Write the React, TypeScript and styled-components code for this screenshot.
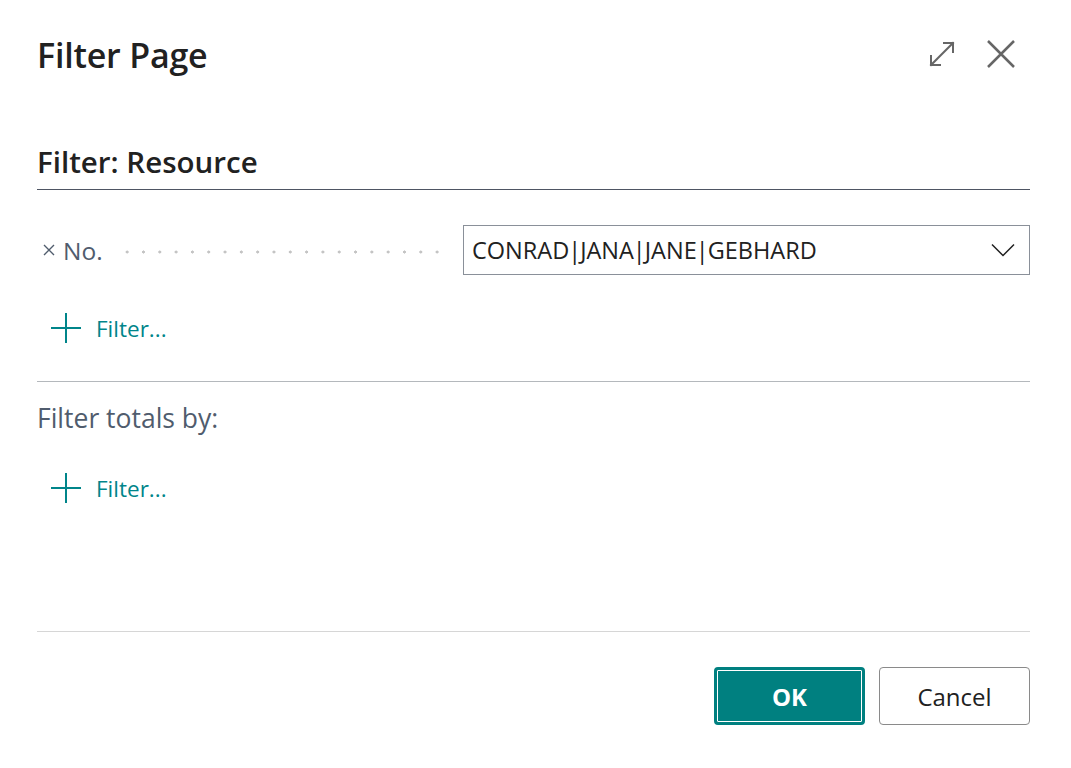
import React from "react";
import styled, { createGlobalStyle } from "styled-components";

const Global = createGlobalStyle`
  html, body { margin: 0; padding: 0; background: #ffffff; }
  body { font-family: "Open Sans", "Noto Sans", sans-serif; color: #212121; }
  * { box-sizing: border-box; }
`;

const Dialog = styled.div`
  width: 1071px;
  height: 768px;
  padding: 0 41px 0 37px;
  display: flex;
  flex-direction: column;
`;

const Header = styled.div`
  height: 112px;
  padding-top: 33px;
  display: flex;
  align-items: flex-start;
  justify-content: space-between;
`;

const Title = styled.h1`
  margin: 0;
  font-size: 34px;
  font-weight: 600;
  line-height: 44px;
  letter-spacing: -0.2px;
  color: #212121;
`;

const HeaderIcons = styled.div`
  display: flex;
  align-items: center;
  gap: 30px;
  padding-top: 6px;
  padding-right: 14px;
`;

const IconButton = styled.button`
  border: none;
  background: none;
  padding: 0;
  margin: 0;
  display: flex;
  cursor: pointer;
`;

const SectionTitle = styled.h2`
  margin: 0;
  padding-top: 31px;
  height: 78px;
  font-size: 29.5px;
  font-weight: 600;
  line-height: 38px;
  color: #212121;
  border-bottom: 1px solid #4e5563;
`;

const FieldRow = styled.div`
  margin-top: 35px;
  display: flex;
  align-items: center;
  height: 50px;
`;

const FieldLabel = styled.div`
  width: 426px;
  display: flex;
  align-items: center;
  color: #505c6d;
  font-size: 24.5px;
  padding-left: 6px;
  padding-right: 18px;
`;

const LabelText = styled.span`
  margin-left: 8px;
  margin-right: 16px;
`;

const Leader = styled.span`
  flex: 1;
  height: 4px;
  margin-top: 4px;
  background-image: radial-gradient(circle, #c4c4c4 1.4px, transparent 1.7px);
  background-size: 16px 4px;
  background-repeat: space no-repeat;
  background-position: 0 0;
`;

const Select = styled.div`
  flex: 1;
  height: 50px;
  border: 1px solid #8a9099;
  display: flex;
  align-items: center;
  justify-content: space-between;
  padding: 0 14px 0 8px;
  font-size: 23.5px;
  color: #212121;
`;

const Pipe = styled.span`
  margin: 0 -1px;
`;

const AddFilter = styled.button<{ $top: number }>`
  margin-top: ${(p) => p.$top}px;
  align-self: flex-start;
  border: none;
  background: none;
  padding: 0 0 0 14px;
  display: flex;
  align-items: center;
  gap: 15px;
  color: #00858a;
  font-family: inherit;
  font-size: 22.5px;
  height: 34px;
  cursor: pointer;
`;

const Divider = styled.div<{ $color: string; $top: number }>`
  margin-top: ${(p) => p.$top}px;
  height: 1px;
  background: ${(p) => p.$color};
`;

const SubLabel = styled.div`
  margin-top: 20px;
  font-size: 26.5px;
  line-height: 32px;
  color: #505c6d;
`;

const Footer = styled.div`
  margin-top: 35px;
  display: flex;
  justify-content: flex-end;
  gap: 14px;
`;

const Button = styled.button<{ $primary?: boolean }>`
  width: 151px;
  height: 58px;
  border-radius: 4px;
  font-family: inherit;
  font-size: 24px;
  cursor: pointer;
  ${(p) =>
    p.$primary
      ? `
    background: #008080;
    color: #ffffff;
    font-weight: 700;
    border: 3px solid #008080;
    box-shadow: inset 0 0 0 1px #ffffff;
  `
      : `
    background: #ffffff;
    color: #212121;
    border: 1px solid #8a8a8a;
  `}
`;

const ExpandIcon = () => (
  <svg width="28" height="28" viewBox="0 0 28 28" fill="none" stroke="#666" strokeWidth="2" strokeLinecap="square">
    <path d="M3 25 L25 3" />
    <path d="M16 3 H25 V12" />
    <path d="M3 16 V25 H12" />
  </svg>
);

const CloseIcon = () => (
  <svg width="30" height="30" viewBox="0 0 30 30" fill="none" stroke="#666" strokeWidth="2.5">
    <path d="M2 2 L28 28 M28 2 L2 28" />
  </svg>
);

const SmallX = () => (
  <svg width="12" height="12" viewBox="0 0 12 12" fill="none" stroke="#505c6d" strokeWidth="1.4">
    <path d="M1 1 L11 11 M11 1 L1 11" />
  </svg>
);

const Chevron = () => (
  <svg width="24" height="14" viewBox="0 0 24 14" fill="none" stroke="#212121" strokeWidth="1.5">
    <path d="M1 1.5 L12 12.5 L23 1.5" />
  </svg>
);

const Plus = () => (
  <svg width="30" height="30" viewBox="0 0 30 30" fill="none" stroke="#00858a" strokeWidth="2">
    <path d="M15 0 V30 M0 15 H30" />
  </svg>
);

const values = ["CONRAD", "JANA", "JANE", "GEBHARD"];

export default function App() {
  return (
    <>
      <Global />
      <Dialog>
        <Header>
          <Title>Filter Page</Title>
          <HeaderIcons>
            <IconButton aria-label="Expand">
              <ExpandIcon />
            </IconButton>
            <IconButton aria-label="Close">
              <CloseIcon />
            </IconButton>
          </HeaderIcons>
        </Header>
        <SectionTitle>Filter: Resource</SectionTitle>
        <FieldRow>
          <FieldLabel>
            <SmallX />
            <LabelText>No.</LabelText>
            <Leader />
          </FieldLabel>
          <Select>
            <span>
              {values.map((v, i) => (
                <React.Fragment key={v}>
                  {i > 0 && <Pipe>|</Pipe>}
                  {v}
                </React.Fragment>
              ))}
            </span>
            <Chevron />
          </Select>
        </FieldRow>
        <AddFilter $top={36}>
          <Plus />
          <span>Filter...</span>
        </AddFilter>
        <Divider $color="#b4b8bc" $top={36} />
        <SubLabel>Filter totals by:</SubLabel>
        <AddFilter $top={37}>
          <Plus />
          <span>Filter...</span>
        </AddFilter>
        <Divider $color="#d6d6d6" $top={126} />
        <Footer>
          <Button $primary>OK</Button>
          <Button>Cancel</Button>
        </Footer>
      </Dialog>
    </>
  );
}
